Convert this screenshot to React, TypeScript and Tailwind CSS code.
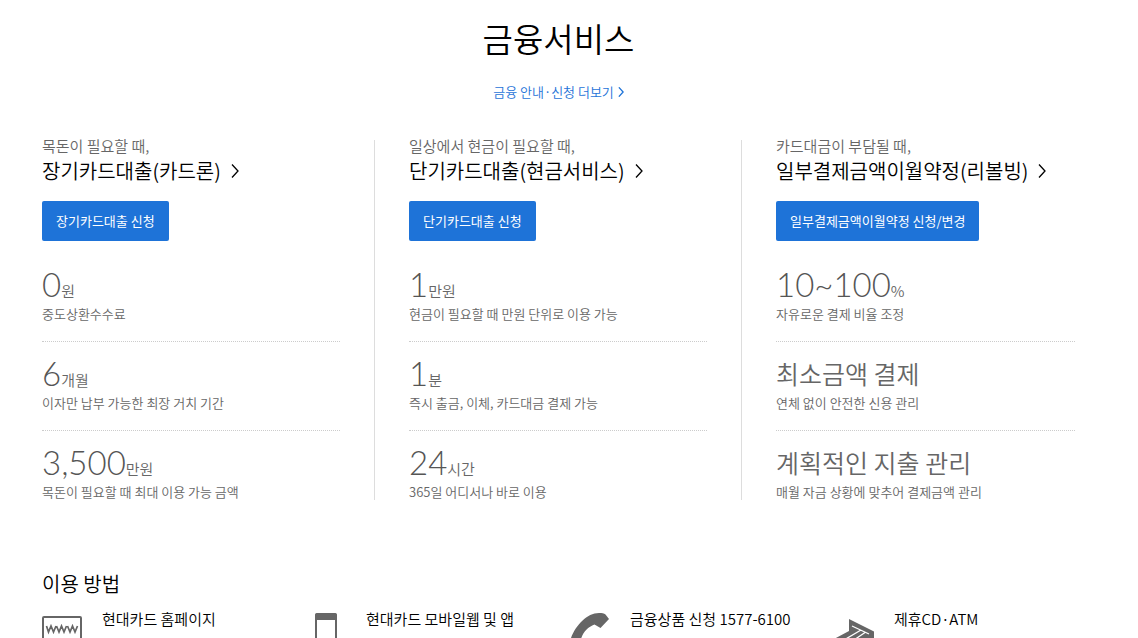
import type { ReactNode } from "react";

type Item = { value: string; unit?: string; desc: string };

type Service = { lead: string; title: string; action: string; items: Item[] };

const services: Service[] = [
  {
    lead: "목돈이 필요할 때,",
    title: "장기카드대출(카드론)",
    action: "장기카드대출 신청",
    items: [
      { value: "0", unit: "원", desc: "중도상환수수료" },
      { value: "6", unit: "개월", desc: "이자만 납부 가능한 최장 거치 기간" },
      { value: "3,500", unit: "만원", desc: "목돈이 필요할 때 최대 이용 가능 금액" },
    ],
  },
  {
    lead: "일상에서 현금이 필요할 때,",
    title: "단기카드대출(현금서비스)",
    action: "단기카드대출 신청",
    items: [
      { value: "1", unit: "만원", desc: "현금이 필요할 때 만원 단위로 이용 가능" },
      { value: "1", unit: "분", desc: "즉시 출금, 이체, 카드대금 결제 가능" },
      { value: "24", unit: "시간", desc: "365일 어디서나 바로 이용" },
    ],
  },
  {
    lead: "카드대금이 부담될 때,",
    title: "일부결제금액이월약정(리볼빙)",
    action: "일부결제금액이월약정 신청/변경",
    items: [
      { value: "10~100", unit: "%", desc: "자유로운 결제 비율 조정" },
      { value: "최소금액 결제", desc: "연체 없이 안전한 신용 관리" },
      { value: "계획적인 지출 관리", desc: "매월 자금 상황에 맞추어 결제금액 관리" },
    ],
  },
];

function Chevron({ className }: { className: string }) {
  return (
    <svg
      viewBox="0 0 8 14"
      className={className}
      fill="none"
      stroke="currentColor"
      strokeWidth="1.3"
      aria-hidden="true"
    >
      <path d="M1 .5l6 6.500-6 6.500" vectorEffect="non-scaling-stroke" />
    </svg>
  );
}

function WebIcon() {
  return (
    <svg width="40" height="40" viewBox="0 0 40 40" fill="none" stroke="#666" aria-hidden="true">
      <rect x="1" y="5" width="38" height="32" rx="1" strokeWidth="2" />
      <path
        d="M4.500 14l2 6 2.500-6 2.500 6 2.500-6M14.500 14l2.500 6 2.500-6 2.500 6 2.500-6M25.500 14l2.500 6 2.500-6 2.500 6 2.500-6"
        strokeWidth="1.7"
      />
    </svg>
  );
}

function MobileIcon() {
  return (
    <svg width="40" height="40" viewBox="0 0 40 40" fill="none" aria-hidden="true">
      <rect x="10" y="2" width="20" height="36" rx="2" stroke="#666" strokeWidth="2" />
      <path d="M9 8V3a2 2 0 0 1 2-2h18a2 2 0 0 1 2 2v5z" fill="#666" />
    </svg>
  );
}

function CallIcon() {
  return (
    <svg width="40" height="40" viewBox="0 0 40 40" fill="#666" aria-hidden="true">
      <path d="M1 26C6 13 17 1 29 1c3 0 5 .3 6.500 1.500L39 7l-8.500 9-6-3.500C18 15 13 20 11 27c-1 4 3 6 5 7l-7 6C2 38-1 32 1 26z" />
    </svg>
  );
}

function AtmIcon() {
  return (
    <svg width="40" height="40" viewBox="0 0 40 40" aria-hidden="true">
      <path d="M0 27l15-8V7l25 12.500V40H0z" fill="#666" />
      <path d="M18 14l17 8M27 18L10 28M31 20.500L20 28" fill="none" stroke="#fff" strokeWidth="1.3" />
    </svg>
  );
}

const channels: { label: string; icon: ReactNode }[] = [
  { label: "현대카드 홈페이지", icon: <WebIcon /> },
  { label: "현대카드 모바일웹 및 앱", icon: <MobileIcon /> },
  { label: "금융상품 신청 1577-6100", icon: <CallIcon /> },
  { label: "제휴CD·ATM", icon: <AtmIcon /> },
];

function ServiceItem({ item }: { item: Item }) {
  return (
    <li className="border-b border-dotted border-[#ccc] pt-[13px] pb-[19px] last:border-b-0 last:pb-0">
      <p className="h-9 leading-9">
        {item.unit ? (
          <>
            <span className="font-['Lato','Noto_Sans_CJK_KR',sans-serif] text-[33px] font-light text-[#555]">
              {item.value}
            </span>
            <span className="text-[15px]">{item.unit}</span>
          </>
        ) : (
          <span className="text-[25px]">{item.value}</span>
        )}
      </p>
      <p className="mt-1 text-[13px] leading-4">{item.desc}</p>
    </li>
  );
}

function ServiceColumn({ service }: { service: Service }) {
  return (
    <section className="border-r border-[#ddd] px-[34px] last:border-r-0">
      <p className="text-[15px] leading-3">{service.lead}</p>
      <h3 className="mt-[7px] text-xl leading-6 text-black">
        <a href="#" className="inline-flex items-center gap-2.5">
          {service.title}
          <Chevron className="h-3.5 w-2" />
        </a>
      </h3>
      <button type="button" className="mt-[18px] block h-10 rounded-xs bg-[#1e73d8] px-3.5 text-[13px] font-normal text-white">
        {service.action}
      </button>
      <ul className="mt-3">
        {service.items.map((item) => (
          <ServiceItem key={item.desc} item={item} />
        ))}
      </ul>
    </section>
  );
}

export default function App() {
  return (
    <main className="h-screen overflow-hidden bg-white pr-[29px] pl-2 font-['Noto_Sans_CJK_KR',sans-serif] font-[350] text-[#666]">
      <header className="pt-3.5 text-center">
        <h2 className="text-[33px] leading-12 text-black">금융서비스</h2>
        <a href="#" className="mt-5 inline-flex items-center gap-1 text-[13px] leading-5 text-[#1e73d8]">
          금융 안내·신청 더보기
          <Chevron className="h-2.5 w-1.5" />
        </a>
      </header>
      <div className="mt-[38px] grid grid-cols-3">
        {services.map((service) => (
          <ServiceColumn key={service.title} service={service} />
        ))}
      </div>
      <section className="mt-[72px] pr-[11px] pl-[34px]">
        <h3 className="text-xl leading-6 text-black">이용 방법</h3>
        <ul className="mt-4 grid grid-cols-4">
          {channels.map((channel) => (
            <li key={channel.label} className="flex items-start gap-5">
              {channel.icon}
              <span className="text-[15px] leading-3.5 text-black">{channel.label}</span>
            </li>
          ))}
        </ul>
      </section>
    </main>
  );
}
